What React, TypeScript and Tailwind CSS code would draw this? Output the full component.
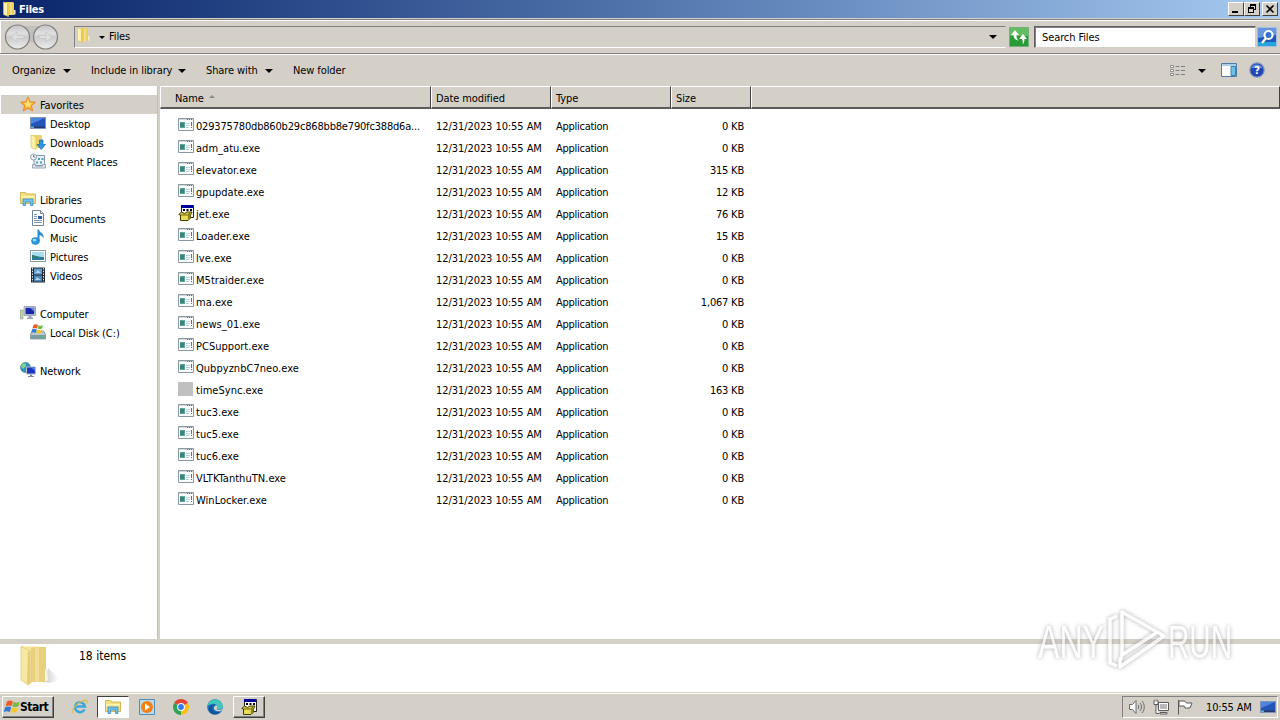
import type { ReactNode } from 'react'

interface FileRow {
  name: string
  size: string
  icon?: 'app' | 'installer' | 'blank'
}

interface NavItem {
  label: string
  icon: ReactNode
  child?: boolean
  spacing?: string
}

const FILES: FileRow[] = [
  { name: '029375780db860b29c868bb8e790fc388d6a...', size: '0 KB' },
  { name: 'adm_atu.exe', size: '0 KB' },
  { name: 'elevator.exe', size: '315 KB' },
  { name: 'gpupdate.exe', size: '12 KB' },
  { name: 'jet.exe', size: '76 KB', icon: 'installer' },
  { name: 'Loader.exe', size: '15 KB' },
  { name: 'lve.exe', size: '0 KB' },
  { name: 'M5traider.exe', size: '0 KB' },
  { name: 'ma.exe', size: '1,067 KB' },
  { name: 'news_01.exe', size: '0 KB' },
  { name: 'PCSupport.exe', size: '0 KB' },
  { name: 'QubpyznbC7neo.exe', size: '0 KB' },
  { name: 'timeSync.exe', size: '163 KB', icon: 'blank' },
  { name: 'tuc3.exe', size: '0 KB' },
  { name: 'tuc5.exe', size: '0 KB' },
  { name: 'tuc6.exe', size: '0 KB' },
  { name: 'VLTKTanthuTN.exe', size: '0 KB' },
  { name: 'WinLocker.exe', size: '0 KB' },
]

function Icon({ children, className = 'w-4 h-4' }: { children: ReactNode; className?: string }) {
  return (
    <svg viewBox="0 0 16 16" className={`shrink-0 ${className}`}>
      {children}
    </svg>
  )
}

function Caret() {
  return (
    <svg viewBox="0 0 8 4" className="w-[8px] h-[4px] shrink-0">
      <path d="M0 0h8L4 4z" fill="#000" />
    </svg>
  )
}

function FolderIcon({ className }: { className?: string }) {
  return (
    <Icon className={className}>
      <path d="M5 1h7l1 1v12H6z" fill="#e9cf62" />
      <path d="M9 2h2v12H9z" fill="#f3df86" />
      <path d="M2.500 1l5 1.500v13l-5-2z" fill="#fbf3ae" stroke="#e0c455" strokeWidth=".6" />
      <path d="M6 3l1.500-.5v13L6 15z" fill="#e8c64a" />
      <path d="M13 9h1.500v4.500H13z" fill="#f1ecc4" />
    </Icon>
  )
}

function StarIcon() {
  return (
    <Icon>
      <path d="M8 .8l2.200 4.900 5.300.5-4 3.600 1.200 5.200L8 12.300 3.300 15l1.200-5.200-4-3.600 5.300-.5z" fill="#f9a92c" stroke="#e8862a" strokeWidth=".9" />
      <path d="M8 3l1.500 3.700 3.500.4-2.800 2.200.5 2.700L8 10.500l-2.500 1 .5-2.500L3.500 7l3-.3z" fill="#ffdf70" />
    </Icon>
  )
}

function DesktopIcon({ className }: { className?: string }) {
  return (
    <Icon className={className}>
      <path d="M.5 2.500h15v11H.5z" fill="#2455b8" stroke="#7f93b6" />
      <path d="M1 3h14c-4 1-8 4-14 6z" fill="#4c85e0" />
      <path d="M1 11.500h14V13H1z" fill="#253a68" />
      <path d="M1 11.500h3V13H1z" fill="#59b4d8" />
    </Icon>
  )
}

function DownloadsIcon() {
  return (
    <Icon>
      <path d="M3 1h8l1 1v12H4z" fill="#ecd36b" />
      <path d="M1 1l5 1.500v13l-5-2z" fill="#fbf0a5" stroke="#d8b848" strokeWidth=".6" />
      <path d="M9.500 6h3.500v4.500h2.500L11.200 15.500 7 10.500h2.500z" fill="#2f96dd" stroke="#1766ac" strokeWidth=".7" />
    </Icon>
  )
}

function RecentIcon() {
  return (
    <Icon>
      <path d="M4 2.500h10.500v10H4z" fill="#eaf2f8" stroke="#8498a8" />
      <path d="M2.500 11.500h3v1.500h7v-1.500h3v3.500h-13z" fill="#dce6ee" stroke="#8498a8" strokeWidth=".8" />
      <path d="M8 5h2v2H8zM11.500 5h2v2h-2zM6 8.500h2v2H6zM10 8.500h2v2h-2z" fill="#4f9bc8" />
      <circle cx="3.600" cy="4" r="3" fill="#f5f8fa" stroke="#8ca0b0" />
      <path d="M3.600 2v2h1.500" fill="none" stroke="#445566" strokeWidth=".8" />
    </Icon>
  )
}

function LibraryIcon({ className }: { className?: string }) {
  return (
    <Icon className={className}>
      <path d="M.5 3V1.500h5L7 3h8.500v9.500H.5z" fill="#f3df80" stroke="#c9a83d" strokeWidth=".8" />
      <path d="M1 5h14v1.500H1z" fill="#fff6b8" />
      <path d="M3 14.500V8h10v6.500h-2.500V11h-5v3.500z" fill="#6fc0ec" stroke="#3b91c4" strokeWidth=".8" />
    </Icon>
  )
}

function DocumentIcon() {
  return (
    <Icon>
      <path d="M2.500.5h8l3 3v12h-11z" fill="#fff" stroke="#71859c" />
      <path d="M10.500.5v3h3" fill="#dce7f2" stroke="#71859c" />
      <path d="M4 4.500h3M4 6.500h3M4 8.500h3M4 10.500h8M4 12.500h8" stroke="#7b96b4" />
      <path d="M8 6h4v3H8z" fill="#315fa3" />
    </Icon>
  )
}

function MusicIcon() {
  return (
    <Icon>
      <ellipse cx="5.500" cy="12" rx="4" ry="3.400" fill="#2c9be0" stroke="#1870ac" strokeWidth=".6" />
      <path d="M7.500 12V.5h1.500c0 3 5.500 3.500 4.500 9-.5-2-2-3-4-3.500V12z" fill="#288bd2" />
      <ellipse cx="4.500" cy="11" rx="1.900" ry="1.200" fill="#9ddcfb" />
    </Icon>
  )
}

function PicturesIcon() {
  return (
    <Icon>
      <path d="M.5 2.500h15v11H.5z" fill="#fff" stroke="#8795a4" />
      <path d="M2 4h12v8H2z" fill="#a5dcf2" />
      <path d="M2 7c3 0 5 2 12 2v3H2z" fill="#377d70" />
      <path d="M2 10c5-1 8 0 12-.5V12H2z" fill="#2b78a6" />
    </Icon>
  )
}

function VideosIcon() {
  return (
    <Icon>
      <path d="M1 .5h14v15H1z" fill="#222b34" />
      <path d="M4 1.500h8v6H4z" fill="#639fce" />
      <path d="M4 8.500h8v6H4z" fill="#4b87b8" />
      <path d="M5 6l3-3 3 3zM5 13l2-3 4 3z" fill="#a9d2e9" />
      <path d="M2.500 1v14M13.500 1v14" stroke="#e2e8ee" strokeDasharray="1.500 1.200" />
    </Icon>
  )
}

function ComputerIcon() {
  return (
    <Icon>
      <path d="M.5 5h2.500v9H.5z" fill="#c9dca3" stroke="#809080" strokeWidth=".6" />
      <path d="M4 1.500h11.500v9H4z" fill="#cfd4dd" stroke="#8e96aa" strokeWidth=".8" />
      <path d="M5.500 2.800h8.700v6.400H5.500z" fill="#1726aa" />
      <path d="M10 2.800h4.200v4z" fill="#6785e8" />
      <path d="M8.500 11h3v1.500H13V14H7v-1.500h1.500z" fill="#9aa5ba" />
    </Icon>
  )
}

function FlagWindows() {
  return (
    <>
      <path d="M2 2.500c2-1.500 4-1 6 0L6.500 7.200c-2-1-4-1-6 0z" fill="#f15a24" />
      <path d="M8.800 3c2 1 4 1 6-.5L13.300 7.300c-2 1-4 1-6 0z" fill="#72b943" />
      <path d="M.2 8.200c2-1 4-1 6 0L4.800 13c-2-1-4-1-6 0z" fill="#2e7bd2" />
      <path d="M7 8.400c2 1 4 1 6 0L11.500 13c-2 1-4 1-6 0z" fill="#f9c72c" />
    </>
  )
}

function DiskIcon() {
  return (
    <Icon>
      <path d="M.5 10l2-3h11l2 3v5H.5z" fill="#b8c9d0" stroke="#6d858e" strokeWidth=".7" />
      <path d="M1 11h14.500v4H1z" fill="#7b9ba5" />
      <path d="M12 13h2.500" stroke="#48dc60" />
      <g transform="translate(2 -1) scale(.76)">
        <FlagWindows />
      </g>
    </Icon>
  )
}

function NetworkIcon() {
  return (
    <Icon>
      <circle cx="5.500" cy="5.500" r="5" fill="#2b91bd" stroke="#267098" strokeWidth=".6" />
      <path d="M2 2c3-2 5 0 4 2L3 7 1 5zM6 8l3-2v4z" fill="#7dd38f" />
      <path d="M6.500 5h9v7h-9z" fill="#1d34bd" stroke="#b2bdd0" />
      <path d="M11 5.500h4V9z" fill="#5279e4" />
      <path d="M10 12.500h2v1.500h2v1H8v-1h2z" fill="#7888ab" />
    </Icon>
  )
}

function AppIcon() {
  return (
    <Icon>
      <path d="M.5 1.500h15v12H.5z" fill="#fbfcfd" stroke="#8c98a0" />
      <path d="M1 2h14v1H1z" fill="#d5d9df" />
      <path d="M9 2.500h1M11 2.500h1M13 2.500h1" stroke="#62687c" />
      <path d="M2 5h5v6H2z" fill="#5ba595" />
      <path d="M2 6h4v4H2z" fill="#3a8580" />
      <path d="M8 6.500h4M8 8.500h4M8 10.500h3" stroke="#bdd3da" />
      <path d="M13.500 5v4M13.500 10v1" stroke="#4477a4" />
    </Icon>
  )
}

function InstallerIcon({ className }: { className?: string }) {
  return (
    <Icon className={className}>
      <path d="M3.500.5h12v12h-12z" fill="#fff" stroke="#222" />
      <path d="M3 0h12v3H3z" fill="#00009c" />
      <path d="M5 5h2M8.500 5h2M12 5h2" stroke="#000" strokeWidth="2" />
      <path d="M.8 9.500L3.500 7l3 1.500L9 7h5l-1.500 3v3l-2.500 2.500H2.500V10z" fill="#d9cc43" stroke="#3f3900" />
      <path d="M3 10h6.500v5H3z" fill="#e9db58" />
      <path d="M10 10l2.500-1.500V13L10 15z" fill="#8f8515" />
      <path d="M3 10h6.500L12 8" fill="none" stroke="#3f3900" strokeWidth=".7" />
    </Icon>
  )
}

const NAV_ITEMS: NavItem[] = [
  { label: 'Favorites', icon: <StarIcon /> },
  { label: 'Desktop', icon: <DesktopIcon />, child: true },
  { label: 'Downloads', icon: <DownloadsIcon />, child: true },
  { label: 'Recent Places', icon: <RecentIcon />, child: true },
  { label: 'Libraries', icon: <LibraryIcon />, spacing: 'mt-[19px]' },
  { label: 'Documents', icon: <DocumentIcon />, child: true },
  { label: 'Music', icon: <MusicIcon />, child: true },
  { label: 'Pictures', icon: <PicturesIcon />, child: true },
  { label: 'Videos', icon: <VideosIcon />, child: true },
  { label: 'Computer', icon: <ComputerIcon />, spacing: 'mt-[19px]' },
  { label: 'Local Disk (C:)', icon: <DiskIcon />, child: true },
  { label: 'Network', icon: <NetworkIcon />, spacing: 'mt-[19px]' },
]

function WindowButton({ children, className = '' }: { children: ReactNode; className?: string }) {
  return (
    <button
      className={`w-4 h-[14px] bg-[#d4d0c8] border border-t-white border-l-white border-r-[#404040] border-b-[#404040] flex items-center justify-center ${className}`}
    >
      <svg viewBox="0 0 12 10" className="w-3 h-[10px]">
        {children}
      </svg>
    </button>
  )
}

function TitleBar() {
  return (
    <div className="h-[18px] bg-linear-to-r from-[#0a246a] to-[#a6caf0] flex items-center pl-[1px] pr-[2px]">
      <FolderIcon className="w-4 h-4" />
      <span className="ml-[2px] pt-[2px] text-white font-bold text-[11px] tracking-[-0.25px]">Files</span>
      <div className="ml-auto flex">
        <WindowButton>
          <path d="M2 7h6v2H2z" />
        </WindowButton>
        <WindowButton>
          <path d="M4 0h6v6H8V5h1V2H5v1H4zM2 3h6v6H2zM3 5v3h4V5z" fillRule="evenodd" />
        </WindowButton>
        <WindowButton className="ml-[2px]">
          <path d="M2.500 1.500l7 7M9.500 1.500l-7 7" stroke="#000" strokeWidth="1.600" />
        </WindowButton>
      </div>
    </div>
  )
}

function AddressBar() {
  return (
    <div className="h-[35px] mt-[1px] border-t border-b border-[#808080] flex items-center">
      <div className="w-full h-full border-t border-l border-white flex items-center">
        <svg viewBox="0 0 56 28" className="w-[56px] h-[28px] ml-[3px] shrink-0">
          <defs>
            <linearGradient id="round" x1="0" y1="0" x2="0" y2="1">
              <stop offset="0" stopColor="#c4c4c4" />
              <stop offset=".35" stopColor="#e0e0e0" />
              <stop offset=".5" stopColor="#cbcbcb" />
              <stop offset="1" stopColor="#ececec" />
            </linearGradient>
          </defs>
          <path d="M13 3h28v18c-8-2-20-2-28 0z" fill="#c2c0bc" />
          <circle cx="13.500" cy="14" r="12" fill="url(#round)" stroke="#808080" strokeWidth="1.200" />
          <circle cx="41.500" cy="14" r="12" fill="url(#round)" stroke="#808080" strokeWidth="1.200" />
          <path d="M7 14l6-5v3.500h7v3h-7V19zM48 14l-6-5v3.500h-7v3h7V19z" fill="#dedede" stroke="#c4c4c4" strokeWidth=".7" />
        </svg>
        <div className="ml-[14px] w-[932px] h-[22px] border border-t-[#808080] border-l-[#808080] border-r-[#d4d0c8] border-b-white flex items-center">
          <FolderIcon className="w-4 h-4 -mt-[4px]" />
          <svg viewBox="0 0 6 3" className="w-[6px] h-[3px] ml-[8px]">
            <path d="M0 0h6L3 3z" />
          </svg>
          <span className="ml-[4px]">Files</span>
          <span className="ml-auto mr-[8px]">
            <Caret />
          </span>
        </div>
        <svg viewBox="0 0 20 20" className="w-5 h-5 ml-[3px] shrink-0">
          <path d="M.5.5h19v19H.5z" fill="#279b34" stroke="#79ad7b" />
          <path d="M1 1h18v8H1z" fill="#63bd63" />
          <path d="M2 8l4-5 4 5H7.500c0 3 .5 4 2 5.500C6 13 4.500 11 4.500 8z" fill="#fff" />
          <path d="M10 12l4-5 4 5h-2.500c0 2-.5 4-2 5.500.5-2 .3-3-.5-5.500z" fill="#fff" />
        </svg>
        <div className="ml-[5px] w-[222px] h-[22px] bg-white border border-t-[#606060] border-l-[#606060] border-r-[#d4d0c8] border-b-[#d4d0c8] shadow-[inset_1px_1px_0_#808080] flex items-center pl-[7px] pt-px">
          Search Files
        </div>
        <svg viewBox="0 0 20 20" className="w-5 h-5 ml-[1px] shrink-0">
          <path d="M.5.5h19v19H.5z" fill="#1e58bd" stroke="#a5bddd" />
          <path d="M1 1h18v7L1 11z" fill="#6596df" />
          <path d="M1 15h18v4H1z" fill="#26a5dd" />
          <path d="M5 16l4-5" stroke="#fff" strokeWidth="2.200" />
          <circle cx="11.500" cy="8" r="4" fill="#3770ce" stroke="#fff" strokeWidth="2" />
        </svg>
      </div>
    </div>
  )
}

function Toolbar() {
  return (
    <div className="h-8 border-t border-white flex items-center pl-3 pr-[15px]">
      <span className="w-[51px]">Organize</span>
      <Caret />
      <span className="ml-[20px] w-[87px]">Include in library</span>
      <Caret />
      <span className="ml-[20px] w-[59px]">Share with</span>
      <Caret />
      <span className="ml-[20px]">New folder</span>
      <div className="ml-auto flex items-center">
        <svg viewBox="0 0 16 14" className="w-4 h-[14px]">
          <path d="M.5 1.500h3v2h-3zM.5 5.500h3v2h-3zM.5 9.500h3v2h-3z" fill="#fff" stroke="#8c8c8c" />
          <path d="M5.500 2.500h4M11 2.500h4M5.500 6.500h4M11 6.500h4M5.500 10.500h4M11 10.500h4" stroke="#7a808a" />
        </svg>
        <span className="ml-[12px]">
          <Caret />
        </span>
        <svg viewBox="0 0 16 14" className="w-4 h-[14px] ml-[15px] -mt-[2px]">
          <path d="M.5.5h15v13H.5z" fill="#fff" stroke="#4c7ca8" />
          <path d="M1 1h14v2H1z" fill="#a8cfe5" />
          <path d="M10 3.500h4.500v9H10z" fill="#6ec0e6" stroke="#3b83ad" />
        </svg>
        <svg viewBox="0 0 16 16" className="w-4 h-4 ml-[12px] -mt-[2px]">
          <circle cx="8" cy="8" r="7.200" fill="#2047b4" stroke="#8997bb" strokeWidth="1.200" />
          <path d="M2.500 6a6 6 0 0 1 11 0z" fill="#6c92df" />
          <text x="8" y="12" textAnchor="middle" fontSize="11" fontWeight="700" fill="#fff">?</text>
        </svg>
      </div>
    </div>
  )
}

function Sidebar() {
  return (
    <div className="w-[157px] bg-white pt-[9px] pl-px shrink-0">
      {NAV_ITEMS.map((item, i) => (
        <div
          key={item.label}
          className={`h-[19px] flex items-center ${item.child ? 'pl-[29px]' : 'pl-[19px]'} ${item.spacing || ''} ${i === 0 ? 'bg-[#d4d0c8]' : ''}`}
        >
          <span className="-mt-px">{item.icon}</span>
          <span className="ml-[4px] pt-[2px]">{item.label}</span>
        </div>
      ))}
    </div>
  )
}

function HeaderCell({ children, className }: { children?: ReactNode; className: string }) {
  return (
    <div
      className={`h-[23px] bg-[#d4d0c8] border-t border-t-white border-l border-l-white border-r border-r-[#404040] border-b-2 border-b-[#5a5a5a] flex items-center pt-[4px] ${className}`}
    >
      {children}
    </div>
  )
}

function FileList() {
  return (
    <div className="flex-1 bg-white">
      <div className="flex">
        <HeaderCell className="w-[271px] pl-[14px]">
          Name
          <svg viewBox="0 0 6 3" className="w-[6px] h-[3px] ml-[5px] mb-[5px]">
            <path d="M0 3h6L3 0z" fill="#8b8b8b" />
          </svg>
        </HeaderCell>
        <HeaderCell className="w-[120px] pl-[4px]">Date modified</HeaderCell>
        <HeaderCell className="w-[120px] pl-[4px]">Type</HeaderCell>
        <HeaderCell className="w-[80px] pl-[4px]">Size</HeaderCell>
        <HeaderCell className="flex-1" />
      </div>
      <div className="pt-[6px]">
        {FILES.map((file, i) => (
          <div key={file.name} className="h-[22px] flex items-center pt-[2px]">
            <div className="w-[276px] pl-[18px] flex items-center">
              <span className="-mt-[4px]">
                {file.icon === 'installer' ? (
                  <InstallerIcon />
                ) : file.icon === 'blank' ? (
                  <div className="w-[15px] h-[14px] mr-px -mt-px bg-[#c0c0c0]" />
                ) : (
                  <AppIcon />
                )}
              </span>
              <span className={`ml-[2px] ${i === 0 ? 'tracking-[-0.18px]' : 'tracking-[0.03px]'}`}>{file.name}</span>
            </div>
            <span className="w-[120px] tracking-[-0.07px]">12/31/2023 10:55 AM</span>
            <span className="w-[108px] tracking-[-0.27px]">Application</span>
            <span className="w-[80px] text-right tracking-[-0.2px]">{file.size}</span>
          </div>
        ))}
      </div>
    </div>
  )
}

function DetailsPane() {
  return (
    <div className="h-[49px] bg-white border-b border-[#d4d0c8] flex">
      <svg viewBox="0 0 42 44" className="w-[42px] h-[44px] ml-[19px]">
        <defs>
          <linearGradient id="folder">
            <stop offset="0" stopColor="#fff3b5" />
            <stop offset="1" stopColor="#e3c46a" />
          </linearGradient>
          <linearGradient id="shade">
            <stop offset="0" stopColor="#aaa" />
            <stop offset="1" stopColor="#fff" />
          </linearGradient>
        </defs>
        <path d="M25 38l4-14c4 4 9 8 11 12l-9 3z" fill="url(#shade)" opacity=".6" />
        <path d="M2 2l23 1 2 2v33H12z" fill="url(#folder)" />
        <path d="M12 4l15-1v34l-15 1z" fill="#e9d07e" />
        <path d="M16 4l4-.5v34l-4 .5z" fill="#f1dd96" />
        <path d="M2 2l9 5c2 2 2 4 1 8v24l-3 2-7-5z" fill="#f7e7a4" stroke="#dfc46c" strokeWidth=".7" />
        <path d="M9 7c3 1 3 4 2 8v24l-3 1z" fill="#e6cb72" />
        <path d="M26 26l2-2 1 12-3 2z" fill="#f4f4e8" />
      </svg>
      <span className="ml-[18px] mt-[5px] text-[12px] tracking-[0px]">18 items</span>
    </div>
  )
}

function Taskbar() {
  return (
    <div className="h-[27px] bg-[#d4d0c8] border-t border-white flex items-center">
      <button className="ml-[2px] w-[52px] h-[22px] border border-t-white border-l-white border-r-[#404040] border-b-[#404040] shadow-[inset_-1px_-1px_0_#808080] flex items-center pl-px">
        <svg viewBox="-1 1 16 14" className="w-4 h-4 shrink-0">
          <FlagWindows />
        </svg>
        <span className="font-bold text-[12px] tracking-[-0.5px]">Start</span>
      </button>
      <svg viewBox="0 0 16 16" className="w-4 h-4 ml-[18px]">
        <path d="M12.500 10.500A5 5 0 1 1 13 7.500H4" fill="none" stroke="#3aa8df" strokeWidth="2.500" />
        <path d="M1 14C-1 10 9 0 14.500 1.500c1 .5.500 2 0 3" fill="none" stroke="#e4ba45" strokeWidth="1.200" />
      </svg>
      <div className="ml-[9px] w-[32px] h-[22px] bg-white border border-t-[#404040] border-l-[#404040] border-r-white border-b-white flex items-center justify-center">
        <LibraryIcon />
      </div>
      <svg viewBox="0 0 16 16" className="w-4 h-4 ml-[10px]">
        <path d="M.5.5h15v15H.5z" fill="#b9dbef" stroke="#528db9" />
        <circle cx="8" cy="8" r="6" fill="#f08113" />
        <path d="M6 4.500l5 3.500-5 3.500z" fill="#fff" />
      </svg>
      <svg viewBox="0 0 16 16" className="w-4 h-4 ml-[18px]">
        <path d="M8 8L1.100 4A8 8 0 0 1 14.900 4z" fill="#e54335" />
        <path d="M8 8V16A8 8 0 0 1 1.100 4z" fill="#31a350" />
        <path d="M8 8L14.900 4A8 8 0 0 1 8 16z" fill="#fbc116" />
        <circle cx="8" cy="8" r="3.900" fill="#fff" />
        <circle cx="8" cy="8" r="2.900" fill="#367bec" />
      </svg>
      <svg viewBox="0 0 16 16" className="w-4 h-4 ml-[18px]">
        <circle cx="8" cy="8" r="7.800" fill="#1474bd" />
        <path d="M.5 7C2-1 13-2 15.800 7c0 3-3 4.500-6 3 2-3-1-6-5-5C3 5.500 1.500 6 .5 7z" fill="#43c6ba" />
        <path d="M6 7c-3 4 3 8 8 5-4 6-13 3-12-3 1-3 4-4 7-3z" fill="#145398" />
        <path d="M9 6c2 1 2 3 .5 4 2 1.500 4 1 6.300-.5L14 12c-4 1-8-1-7-4z" fill="#d4d0c8" />
      </svg>
      <div className="ml-[10px] w-[32px] h-[22px] border border-t-white border-l-white border-r-[#404040] border-b-[#404040] shadow-[inset_-1px_-1px_0_#808080] flex items-center justify-center">
        <InstallerIcon />
      </div>
      <div className="ml-auto mr-[2px] w-[156px] h-[22px] border border-t-[#808080] border-l-[#808080] border-r-white border-b-white flex items-center pl-[6px]">
        <svg viewBox="0 0 16 16" className="w-4 h-4" fill="none" stroke="#6a6a6a">
          <path d="M.5 5.500h3L7 1.500v13l-3.500-4h-3z" fill="#fff" />
          <path d="M9 6c1 1 1 3 0 4M11 4c2 2 2 6 0 8M13 2c3 3 3 9 0 12" />
        </svg>
        <svg viewBox="0 0 16 16" className="w-4 h-4 ml-[8px]" fill="#fff" stroke="#5a5a5a">
          <path d="M5.500 3.500h10v8h-10z" />
          <path d="M7 5h7v5H7z" fill="#b9b9b9" stroke="none" />
          <path d="M7 13.500h7v1.500H7zM1 1.500v4h4v-4M2 .5v2M4 .5v2M3 6v8.500h3" />
        </svg>
        <svg viewBox="0 0 16 16" className="w-4 h-4 ml-[8px]" fill="#fff" stroke="#5a5a5a">
          <path d="M1.500 1v14.500M2 2h5c2 0 1 2 3 2h5l-2 5H8L7 7H2z" />
        </svg>
        <span className="ml-[13px] w-[47px] pt-px whitespace-nowrap tracking-[-0.15px]">10:55 AM</span>
        <DesktopIcon className="w-4 h-4 ml-[7px]" />
      </div>
    </div>
  )
}

function Watermark() {
  return (
    <svg
      viewBox="0 0 230 84"
      className="absolute left-[1022px] top-[599px] w-[230px] h-[84px] opacity-70 drop-shadow-[0_0_2px_#888]"
    >
      <g fill="#fff" fontFamily="Liberation Sans Narrow, Liberation Sans, sans-serif" fontSize="47">
        <text x="16" y="59" textLength="66" lengthAdjust="spacingAndGlyphs">ANY</text>
        <text x="146" y="59" textLength="64" lengthAdjust="spacingAndGlyphs">RUN</text>
      </g>
      <g fill="none" stroke="#fff" strokeWidth="3.500" strokeLinejoin="round">
        <path d="M95 17l-7 3v44l7 3" />
        <path d="M100 56V13l42 24-44 31v-6l2-6 34-22" />
      </g>
    </svg>
  )
}

export default function App() {
  return (
    <div className="relative w-[1280px] h-[720px] overflow-hidden bg-[#d4d0c8] text-black text-[11px] leading-[14px] tracking-[-0.1px] font-['DejaVu_Sans_Condensed','DejaVu_Sans',sans-serif] whitespace-nowrap flex flex-col">
      <TitleBar />
      <AddressBar />
      <Toolbar />
      <div className="h-[553px] flex">
        <Sidebar />
        <div className="w-[3px] border-l border-[#c4c0b8]" />
        <FileList />
      </div>
      <div className="h-[5px] shrink-0" />
      <DetailsPane />
      <Taskbar />
      <Watermark />
    </div>
  )
}
